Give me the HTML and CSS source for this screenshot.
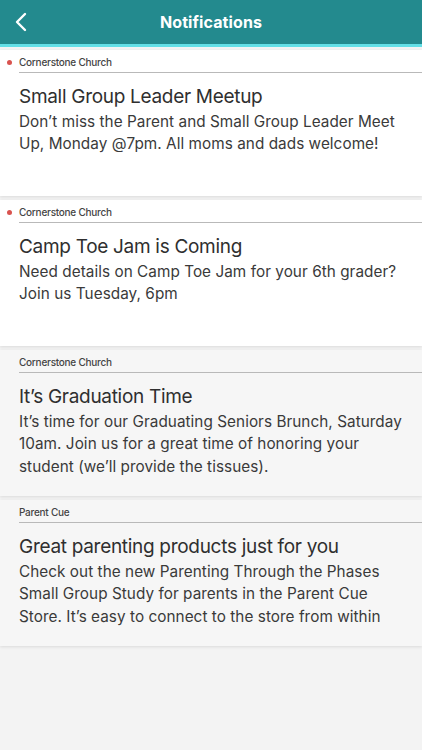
FILE: index.html
```html
<!DOCTYPE html>
<html>
<head>
<meta charset="utf-8">
<link rel="stylesheet" href="styles.css">
</head>
<body>
<header class="topbar">
  <button class="back" aria-label="Back">
    <svg width="14" height="20" viewBox="0 0 14 20"><path d="M11 2 L3 10 L11 18" fill="none" stroke="#fff" stroke-width="2.4" stroke-linecap="round" stroke-linejoin="round"/></svg>
  </button>
  <h1 class="title">Notifications</h1>
</header>
<div class="strip"></div>
<main class="list">
  <article class="card unread">
    <div class="source"><span class="dot"></span><span class="name">Cornerstone Church</span></div>
    <h2 class="head">Small Group Leader Meetup</h2>
    <p class="body">Don’t miss the Parent and Small Group Leader Meet Up, Monday @7pm. All moms and dads welcome!</p>
  </article>
  <article class="card unread">
    <div class="source"><span class="dot"></span><span class="name">Cornerstone Church</span></div>
    <h2 class="head">Camp Toe Jam is Coming</h2>
    <p class="body">Need details on Camp Toe Jam for your 6th grader? Join us Tuesday, 6pm</p>
  </article>
  <article class="card read">
    <div class="source"><span class="name">Cornerstone Church</span></div>
    <h2 class="head">It’s Graduation Time</h2>
    <p class="body">It’s time for our Graduating Seniors Brunch, Saturday 10am. Join us for a great time of honoring your student (we’ll provide the tissues).</p>
  </article>
  <article class="card read">
    <div class="source"><span class="name">Parent Cue</span></div>
    <h2 class="head">Great parenting products just for you</h2>
    <p class="body">Check out the new Parenting Through the Phases Small Group Study for parents in the Parent Cue Store. It’s easy to connect to the store from within the app.</p>
  </article>
</main>
</body>
</html>
```
FILE: styles.css
```css
* { box-sizing: border-box; }
html, body { margin: 0; padding: 0; }
body {
  width: 422px;
  height: 750px;
  background: #f3f3f3;
  font-family: Inter, "Liberation Sans", sans-serif;
  color: #333;
  overflow: hidden;
}
.topbar {
  height: 44px;
  background: #238a8e;
  display: flex;
  align-items: center;
  justify-content: center;
  position: relative;
}
.back {
  position: absolute;
  left: 14px;
  top: 12px;
  background: none;
  border: 0;
  padding: 0;
  width: 14px;
  height: 20px;
  display: flex;
}
.title {
  margin: 0;
  color: #fff;
  font-size: 16px;
  font-weight: 700;
  letter-spacing: 0.1px;
}
.strip {
  height: 3px;
  background: #63dfe6;
}
.list {
  padding-top: 3px;
  display: flex;
  flex-direction: column;
  gap: 4px;
  background: #f3f3f3;
}
.card {
  height: 146px;
  padding-left: 19px;
  overflow: hidden;
  box-shadow: 0 1px 3px rgba(0,0,0,0.10);
}
.unread { background: #fff; }
.read { background: #f6f6f6; }
.source {
  height: 23px;
  border-bottom: 1.5px solid #b9b9b9;
  display: flex;
  align-items: center;
  padding-top: 1px;
  position: relative;
}
.dot {
  position: absolute;
  left: -12px;
  top: 10px;
  width: 5px;
  height: 5px;
  border-radius: 50%;
  background: #d9534f;
}
.name {
  font-size: 10px;
  font-weight: 500;
  color: #444;
  letter-spacing: -0.25px;
}
.head {
  margin: 12px 0 0;
  font-size: 19px;
  font-weight: 400;
  line-height: 24px;
  color: #2f2f2f;
  letter-spacing: -0.3px;
}
.body {
  margin: 2px 0 0;
  padding-right: 17px;
  font-size: 15.3px;
  line-height: 22.3px;
  color: #3a3a3a;
  letter-spacing: 0.05px;
  max-height: 71px;
  overflow: hidden;
}
```
